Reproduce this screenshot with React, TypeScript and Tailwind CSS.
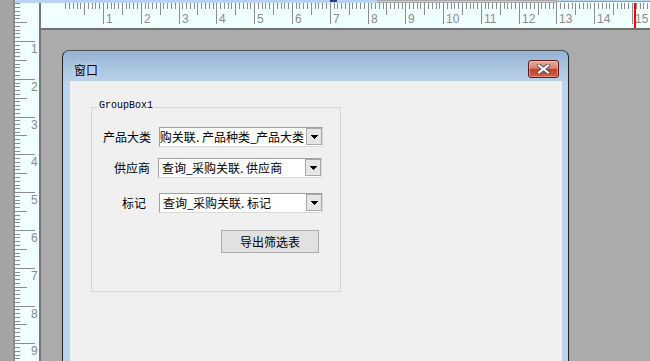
import React from "react";

const STEP = 3.779;
const TICK = "#8c8c8c";

function HRuler() {
  const w = 609;
  const origin = 24.2;
  const items: React.ReactNode[] = [];
  for (let i = 0; ; i++) {
    const x = origin + i * STEP;
    if (x > w) break;
    const rx = Math.round(x);
    let h = 6;
    if (i > 0 && i % 10 === 0) h = 21;
    else if (i > 0 && i % 5 === 0) h = 12;
    items.push(<rect key={"t" + i} x={rx} y={0} width={1} height={h} fill={TICK} />);
    if (i > 0 && i % 10 === 0) {
      items.push(
        <text key={"l" + i} x={rx + 3} y={20} fontSize={12} fill="#8a8a8a" fontFamily="'Liberation Sans', sans-serif">
          {i / 10}
        </text>
      );
    }
  }
  return (
    <svg width={w} height={25} className="block" shapeRendering="crispEdges">
      {items}
      <rect x={593} y={0} width={1.5} height={25} fill="#ff0000" />
    </svg>
  );
}

function VRuler() {
  const h = 358;
  const origin = 0.2;
  const items: React.ReactNode[] = [];
  for (let i = 0; ; i++) {
    const y = origin + i * STEP;
    if (y > h) break;
    const ry = Math.round(y);
    let w = 5;
    if (i > 0 && i % 10 === 0) w = 20;
    else if (i > 0 && i % 5 === 0) w = 12;
    items.push(<rect key={"t" + i} x={0} y={ry} width={w} height={1} fill={TICK} />);
    if (i > 0 && i % 10 === 0) {
      items.push(
        <text key={"l" + i} x={16} y={ry + 12} fontSize={12} fill="#8a8a8a" fontFamily="'Liberation Sans', sans-serif">
          {i / 10}
        </text>
      );
    }
  }
  return (
    <svg width={24} height={h} className="block" shapeRendering="crispEdges">
      {items}
    </svg>
  );
}

function CJK({ text }: { text: string }) {
  return (
    <>
      {Array.from(text).map((ch, i) =>
        ch.charCodeAt(0) < 128 ? (
          <span key={i} className="inline-block w-[6px]">
            {ch}
          </span>
        ) : (
          <span key={i}>{ch}</span>
        )
      )}
    </>
  );
}

function Combo({ text, end }: { text: string; end?: boolean }) {
  return (
    <div className="flex w-[164px] h-[20px] bg-white border border-t-[#a0a0a0] border-l-[#a0a0a0] border-r-[#dadada] border-b-[#dadada]">
      <div
        className={
          "flex-1 flex overflow-hidden whitespace-nowrap items-center leading-[18px] text-[12px] text-black " +
          (end ? "justify-end pr-[2px]" : "justify-start pl-[3px]")
        }
      >
        <span className="shrink-0">
          <CJK text={text} />
        </span>
      </div>
      <div className="w-[16px] h-[17px] bg-[#e6e6e6] border border-[#a8a8a8] flex items-center justify-center">
        <svg width="7" height="4" viewBox="0 0 7 4" shapeRendering="crispEdges">
          <path d="M0 0H7L3.5 4Z" fill="#000" />
        </svg>
      </div>
    </div>
  );
}

export default function App() {
  return (
    <div
      className="w-[650px] h-[361px] flex overflow-hidden bg-[#ababab]"
      style={{ fontFamily: "'Noto Sans CJK SC', 'Noto Sans', sans-serif" }}
    >
      {/* left strip */}
      <div className="w-[15px] h-full bg-[#a4a4a4] border-r-2 border-[#8d8d8d]" />
      <div className="flex-1 flex flex-col min-w-0">
        {/* top strip */}
        <div className="h-[3px] flex">
          <div className="w-[362px] bg-[#b8d2f4] relative">
            <div className="absolute left-[315px] top-0 w-[7px] h-[2px] bg-[#2c3e80]" />
          </div>
          <div className="w-[180px] bg-[#c9c9c9] border border-[#a9a9a9]" />
          <div className="flex-1 flex flex-col">
            <div className="h-[1px] bg-[#bfd6f3]" />
            <div className="h-[1px] bg-[#6f9fe0]" />
            <div className="flex-1 bg-[#f0ffff]" />
          </div>
        </div>
        <div className="flex-1 flex min-h-0">
          {/* vertical ruler */}
          <div className="w-[26px] h-full bg-[#f0ffff] border-r-2 border-[#767676] overflow-hidden">
            <VRuler />
          </div>
          <div className="flex-1 flex flex-col min-w-0">
            {/* horizontal ruler */}
            <div className="h-[27px] bg-[#f0ffff] border-b-2 border-[#707070] overflow-hidden">
              <HRuler />
            </div>
            {/* canvas */}
            <div className="flex-1 overflow-hidden pl-[21px] pt-[20px]">
              <div className="w-[507px] h-[330px] flex flex-col rounded-t-[7px] border border-[#262626] border-t-[#4d4d4d] shadow-[1px_0_0_#3cc8ea] bg-[linear-gradient(#97b3d2,#b8d0ea_30px,#bcd4ed_31px)]">
                {/* title bar */}
                <div className="h-[30px] flex justify-between pl-[11px] pr-[9px]">
                  <div className="mt-[11px] text-[12px] leading-[16px] text-black [text-shadow:0_0_5px_rgba(255,255,255,0.9)]">
                    窗口
                  </div>
                  <div className="mt-[9px] w-[31px] h-[18px] rounded-[3px] border border-[#5c1d1d] bg-[linear-gradient(#eaaa9a,#d88472_45%,#c2432c_52%,#cf5e44)] flex items-center justify-center shadow-[inset_0_0_0_1px_rgba(255,210,200,0.45)]">
                    <svg width="13" height="10" viewBox="0 0 13 10">
                      <path d="M2 1.5L11 8.5M11 1.5L2 8.5" stroke="#4a4a4a" strokeWidth="4" strokeLinecap="square" />
                      <path d="M2 1.5L11 8.5M11 1.5L2 8.5" stroke="#ffffff" strokeWidth="2.2" strokeLinecap="square" />
                    </svg>
                  </div>
                </div>
                {/* client */}
                <div className="flex-1 ml-[7px] mr-[6px] bg-[#f0f0f0] pl-[21px] pt-[26px]">
                  <div className="relative w-[250px] h-[185px] border border-[#d6d6d6] flex flex-col">
                    <span
                      className="absolute -top-[8px] left-[5px] px-[2px] bg-[#f0f0f0] text-[10px] leading-[12px] text-black"
                      style={{ fontFamily: "'Liberation Mono', monospace" }}
                    >
                      GroupBox1
                    </span>
                    <div className="mt-[19px] flex items-center">
                      <div className="w-[67px] pr-[8px] text-right text-[12px] leading-[16px] text-black">产品大类</div>
                      <Combo text="查询_采购关联.产品种类_产品大类" end />
                    </div>
                    <div className="mt-[11px] flex items-center">
                      <div className="w-[66px] pr-[8px] text-right text-[12px] leading-[16px] text-black">供应商</div>
                      <Combo text="查询_采购关联.供应商" />
                    </div>
                    <div className="mt-[15px] flex items-center">
                      <div className="w-[67px] pr-[13px] text-right text-[12px] leading-[16px] text-black">标记</div>
                      <Combo text="查询_采购关联.标记" />
                    </div>
                    <div className="mt-[17px] ml-[129px] w-[98px] h-[23px] bg-[#e1e1e1] border border-[#adadad] flex items-center justify-center text-[12px] leading-[16px] text-black">
                      导出筛选表
                    </div>
                  </div>
                </div>
              </div>
            </div>
          </div>
        </div>
      </div>
    </div>
  );
}
